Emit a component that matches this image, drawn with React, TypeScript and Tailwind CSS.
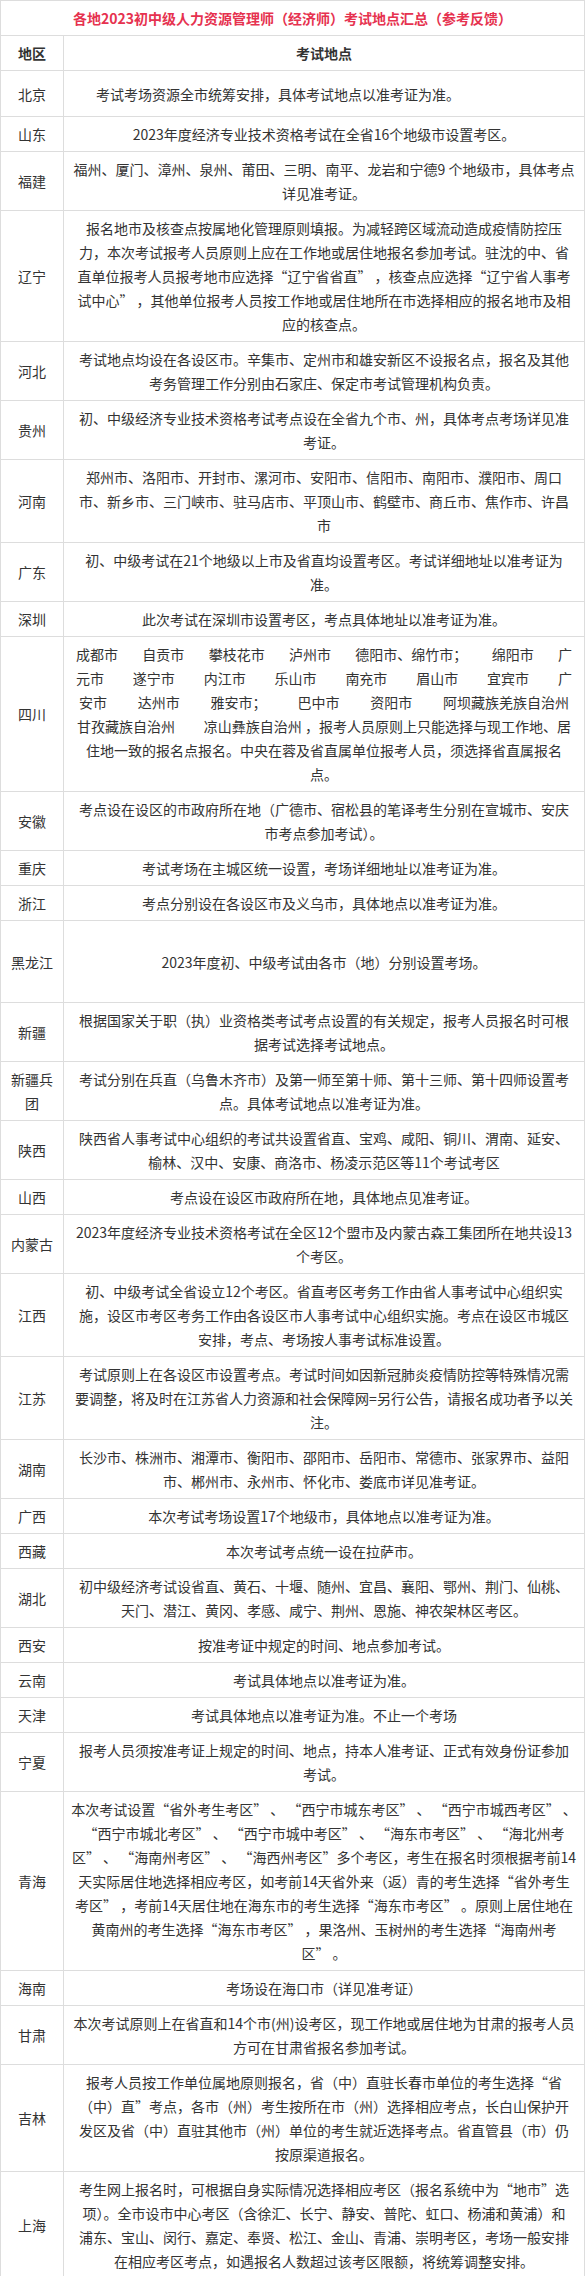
import React from 'react';

type Row = { area: string[]; lines: string[]; h?: string; shift?: string };

const rows: Row[] = [
  { area: ['北京'], lines: ['考试考场资源全市统筹安排，具体考试地点以准考证为准。'], h: 'h-[46px]', shift: 'pr-[92px]' },
  { area: ['山东'], lines: ['2023年度经济专业技术资格考试在全省16个地级市设置考区。'] },
  { area: ['福建'], lines: ['福州、厦门、漳州、泉州、莆田、三明、南平、龙岩和宁德9 个地级市，具体考点', '详见准考证。'] },
  {
    area: ['辽宁'],
    lines: [
      '报名地市及核查点按属地化管理原则填报。为减轻跨区域流动造成疫情防控压',
      '力，本次考试报考人员原则上应在工作地或居住地报名参加考试。驻沈的中、省',
      '直单位报考人员报考地市应选择“辽宁省省直” ，核查点应选择“辽宁省人事考',
      '试中心” ，其他单位报考人员按工作地或居住地所在市选择相应的报名地市及相',
      '应的核查点。',
    ],
  },
  { area: ['河北'], lines: ['考试地点均设在各设区市。辛集市、定州市和雄安新区不设报名点，报名及其他', '考务管理工作分别由石家庄、保定市考试管理机构负责。'] },
  { area: ['贵州'], lines: ['初、中级经济专业技术资格考试考点设在全省九个市、州，具体考点考场详见准', '考证。'] },
  {
    area: ['河南'],
    lines: [
      '郑州市、洛阳市、开封市、漯河市、安阳市、信阳市、南阳市、濮阳市、周口',
      '市、新乡市、三门峡市、驻马店市、平顶山市、鹤壁市、商丘市、焦作市、许昌',
      '市',
    ],
  },
  { area: ['广东'], lines: ['初、中级考试在21个地级以上市及省直均设置考区。考试详细地址以准考证为', '准。'] },
  { area: ['深圳'], lines: ['此次考试在深圳市设置考区，考点具体地址以准考证为准。'] },
  { area: ['四川'], lines: [] },
  { area: ['安徽'], lines: ['考点设在设区的市政府所在地（广德市、宿松县的笔译考生分别在宣城市、安庆', '市考点参加考试）。'] },
  { area: ['重庆'], lines: ['考试考场在主城区统一设置，考场详细地址以准考证为准。'] },
  { area: ['浙江'], lines: ['考点分别设在各设区市及义乌市，具体地点以准考证为准。'] },
  { area: ['黑龙江'], lines: ['2023年度初、中级考试由各市（地）分别设置考场。'], h: 'h-[82px]' },
  { area: ['新疆'], lines: ['根据国家关于职（执）业资格类考试考点设置的有关规定，报考人员报名时可根', '据考试选择考试地点。'] },
  { area: ['新疆兵', '团'], lines: ['考试分别在兵直（乌鲁木齐市）及第一师至第十师、第十三师、第十四师设置考', '点。具体考试地点以准考证为准。'] },
  { area: ['陕西'], lines: ['陕西省人事考试中心组织的考试共设置省直、宝鸡、咸阳、铜川、渭南、延安、', '榆林、汉中、安康、商洛市、杨凌示范区等11个考试考区'] },
  { area: ['山西'], lines: ['考点设在设区市政府所在地，具体地点见准考证。'] },
  { area: ['内蒙古'], lines: ['2023年度经济专业技术资格考试在全区12个盟市及内蒙古森工集团所在地共设13', '个考区。'] },
  {
    area: ['江西'],
    lines: [
      '初、中级考试全省设立12个考区。省直考区考务工作由省人事考试中心组织实',
      '施，设区市考区考务工作由各设区市人事考试中心组织实施。考点在设区市城区',
      '安排，考点、考场按人事考试标准设置。',
    ],
  },
  {
    area: ['江苏'],
    lines: [
      '考试原则上在各设区市设置考点。考试时间如因新冠肺炎疫情防控等特殊情况需',
      '要调整，将及时在江苏省人力资源和社会保障网=另行公告，请报名成功者予以关',
      '注。',
    ],
  },
  { area: ['湖南'], lines: ['长沙市、株洲市、湘潭市、衡阳市、邵阳市、岳阳市、常德市、张家界市、益阳', '市、郴州市、永州市、怀化市、娄底市详见准考证。'] },
  { area: ['广西'], lines: ['本次考试考场设置17个地级市，具体地点以准考证为准。'] },
  { area: ['西藏'], lines: ['本次考试考点统一设在拉萨市。'] },
  { area: ['湖北'], lines: ['初中级经济考试设省直、黄石、十堰、随州、宜昌、襄阳、鄂州、荆门、仙桃、', '天门、潜江、黄冈、孝感、咸宁、荆州、恩施、神农架林区考区。'] },
  { area: ['西安'], lines: ['按准考证中规定的时间、地点参加考试。'] },
  { area: ['云南'], lines: ['考试具体地点以准考证为准。'] },
  { area: ['天津'], lines: ['考试具体地点以准考证为准。不止一个考场'] },
  { area: ['宁夏'], lines: ['报考人员须按准考证上规定的时间、地点，持本人准考证、正式有效身份证参加', '考试。'] },
  {
    area: ['青海'],
    lines: [
      '本次考试设置“省外考生考区” 、 “西宁市城东考区” 、 “西宁市城西考区” 、',
      '“西宁市城北考区” 、 “西宁市城中考区” 、 “海东市考区” 、 “海北州考',
      '区” 、 “海南州考区” 、 “海西州考区”多个考区，考生在报名时须根据考前14',
      '天实际居住地选择相应考区，如考前14天省外来（返）青的考生选择“省外考生',
      '考区” ，考前14天居住地在海东市的考生选择“海东市考区” 。原则上居住地在',
      '黄南州的考生选择“海东市考区” ，果洛州、玉树州的考生选择“海南州考',
      '区” 。',
    ],
  },
  { area: ['海南'], lines: ['考场设在海口市（详见准考证）'] },
  { area: ['甘肃'], lines: ['本次考试原则上在省直和14个市(州)设考区，现工作地或居住地为甘肃的报考人员', '方可在甘肃省报名参加考试。'] },
  {
    area: ['吉林'],
    lines: [
      '报考人员按工作单位属地原则报名，省（中）直驻长春市单位的考生选择“省',
      '（中）直”考点，各市（州）考生按所在市（州）选择相应考点，长白山保护开',
      '发区及省（中）直驻其他市（州）单位的考生就近选择考点。省直管县（市）仍',
      '按原渠道报名。',
    ],
  },
  {
    area: ['上海'],
    lines: [
      '考生网上报名时，可根据自身实际情况选择相应考区（报名系统中为“地市”选',
      '项）。全市设市中心考区（含徐汇、长宁、静安、普陀、虹口、杨浦和黄浦）和',
      '浦东、宝山、闵行、嘉定、奉贤、松江、金山、青浦、崇明考区，考场一般安排',
      '在相应考区考点，如遇报名人数超过该考区限额，将统筹调整安排。',
    ],
  },
];

// 四川 cell: spaced city names, stretched lines
const Sichuan = () => (
  <div className="flex flex-col items-center">
    <div className="flex w-[496px] justify-between whitespace-nowrap">
      {['成都市', '自贡市', '攀枝花市', '泸州市', '德阳市、绵竹市；', '绵阳市', '广'].map((t) => <span key={t}>{t}</span>)}
    </div>
    <div className="flex w-[496px] justify-between whitespace-nowrap">
      {['元市', '遂宁市', '内江市', '乐山市', '南充市', '眉山市', '宜宾市', '广'].map((t) => <span key={t}>{t}</span>)}
    </div>
    <div className="flex w-[490px] justify-between whitespace-nowrap">
      {['安市', '达州市', '雅安市；', '巴中市', '资阳市', '阿坝藏族羌族自治州'].map((t) => <span key={t}>{t}</span>)}
    </div>
    <div className="flex w-[494px] justify-between whitespace-nowrap">
      <span>甘孜藏族自治州</span>
      <span>凉山彝族自治州 ，报考人员原则上只能选择与现工作地、居</span>
    </div>
    <div className="whitespace-nowrap">住地一致的报名点报名。中央在蓉及省直属单位报考人员，须选择省直属报名</div>
    <div className="whitespace-nowrap">点。</div>
  </div>
);

export default function App() {
  return (
    <div className="w-[585px] bg-white font-['Noto_Sans_CJK_SC','Microsoft_YaHei',sans-serif] text-[14px] leading-[24px] text-[#333]">
      <table className="w-full border-collapse">
        <tbody>
          <tr>
            <td colSpan={2} className="border border-[#dddddd] px-2 py-[5px] text-center font-bold text-[#e6324f]">
              各地2023初中级人力资源管理师（经济师）考试地点汇总（参考反馈）
            </td>
          </tr>
          <tr>
            <td className="w-[63px] border border-[#dddddd] py-[5px] text-center font-bold">地区</td>
            <td className="border border-[#dddddd] py-[5px] text-center font-bold">考试地点</td>
          </tr>
          {rows.map((r) => (
            <tr key={r.area.join('')} className={r.h}>
              <td className="w-[63px] border border-[#dddddd] px-1 py-[5px] text-center align-middle">
                {r.area.map((a) => (
                  <div key={a}>{a}</div>
                ))}
              </td>
              <td className={`border border-[#dddddd] py-[5px] text-center align-middle ${r.shift ?? ''}`}>
                {r.area[0] === '四川' ? (
                  <Sichuan />
                ) : (
                  r.lines.map((l, i) => (
                    <div key={i} className="whitespace-nowrap">
                      {l}
                    </div>
                  ))
                )}
              </td>
            </tr>
          ))}
        </tbody>
      </table>
    </div>
  );
}
